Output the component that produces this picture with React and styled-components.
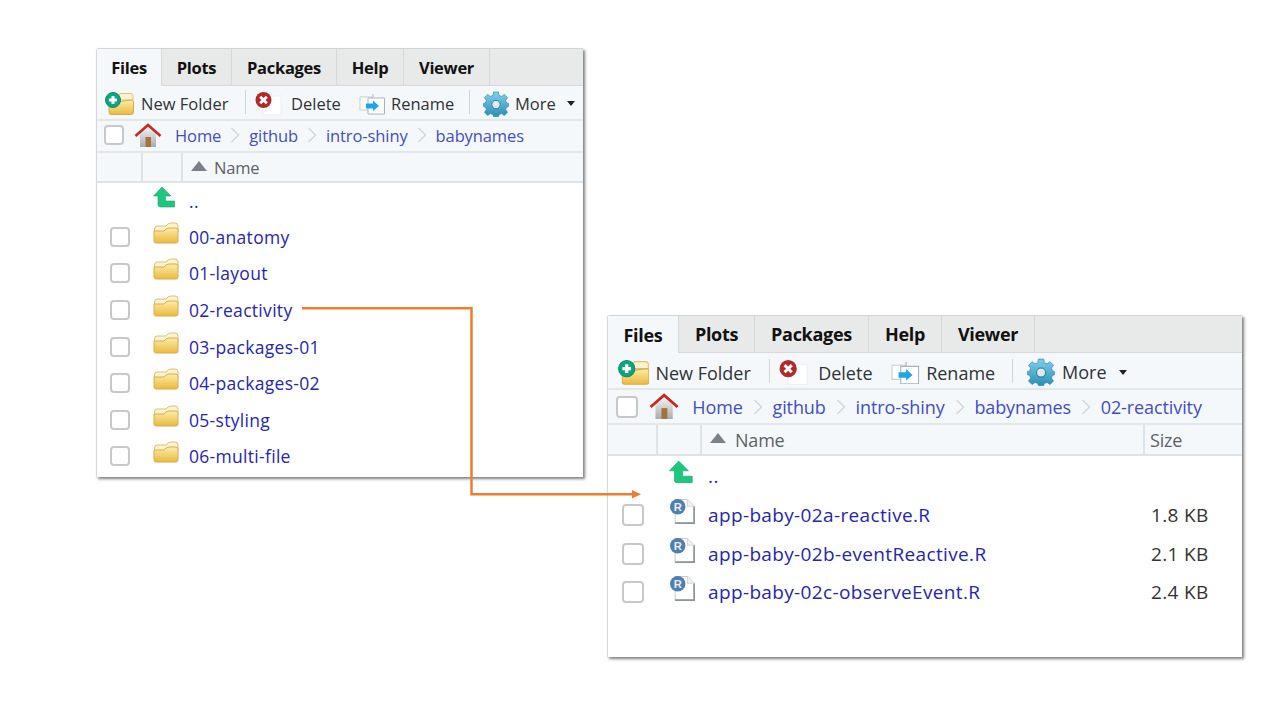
import React from 'react';
import styled, { ThemeProvider, createGlobalStyle } from 'styled-components';

const GlobalStyle = createGlobalStyle`
  html, body {
    margin: 0;
    padding: 0;
    background: #fff;
    font-family: 'Open Sans', 'Noto Sans', sans-serif;
  }
`;

const smallPane = {
  left: 96, top: 48, width: 487, height: 429,
  font: 16.5, tabFont: 16.5, rowFont: 17.5, rowSpacing: 0.3,
  tabH: 37, toolH: 35, crumbH: 32, headH: 30, rowH: 36.6, firstRow: 35.5,
  box: 20, toolPad: 7, toolLift: 2, crumbLift: 2, crumbPad: 7, homeLeft: 10, homeRight: 13, crumbGap: 9, iconScale: 1,
  colA: 46, colB: 40, rowPad: 13, rowIconGap: 23, rowTextGap: 10,
  sizeCol: 0, sizeHead: 0,
  folderGap: 7, deleteGap: 9, renameGap: 5, moreGap: 6, caretGap: 5, gearMargin: 13, nameGap: 7,
};

const bigPane = {
  left: 607, top: 315, width: 635, height: 342,
  font: 18, tabFont: 18, rowFont: 19, rowSpacing: 0.35,
  tabH: 37, toolH: 37, crumbH: 35, headH: 31, rowH: 38.6, firstRow: 40,
  box: 22, toolPad: 9, toolLift: 4, crumbLift: 0, crumbPad: 8, homeLeft: 11, homeRight: 13, crumbGap: 9.9, iconScale: 1.08,
  colA: 50, colB: 44, rowPad: 14, rowIconGap: 25, rowTextGap: 11,
  sizeCol: 91, sizeHead: 97,
  folderGap: 6, deleteGap: 10, renameGap: 6, moreGap: 7, caretGap: 5, gearMargin: 14, nameGap: 9,
};

const Stage = styled.div`
  position: relative;
  width: 1280px;
  height: 720px;
  overflow: hidden;
  background: #fff;
`;

const Pane = styled.section`
  position: absolute;
  left: ${p => p.theme.left}px;
  top: ${p => p.theme.top}px;
  width: ${p => p.theme.width}px;
  height: ${p => p.theme.height}px;
  box-sizing: border-box;
  display: flex;
  flex-direction: column;
  background: #fff;
  border-top: 1px solid #d4d4d4;
  border-left: 1px solid #d8d8d8;
  border-top-left-radius: 3px;
  box-shadow: 2px 2px 3px rgba(0, 0, 0, 0.5);
  font-size: ${p => p.theme.font}px;
  overflow: visible;
`;

const TabStrip = styled.div`
  display: flex;
  height: ${p => p.theme.tabH}px;
  flex: none;
  background: #e8e9e9;
  border-bottom: 1px solid #d6d8d9;
  box-sizing: border-box;
`;

const Tab = styled.div`
  width: ${p => p.$w}px;
  box-sizing: border-box;
  display: flex;
  align-items: center;
  justify-content: center;
  font-weight: 700;
  font-size: ${p => p.theme.tabFont}px;
  color: #111;
  letter-spacing: -0.3px;
  border-right: 1px solid #d6d8d9;
  ${p => p.$active && `
    background: #f5f8fa;
    height: calc(100% + 1px);
  `}
`;

const Toolbar = styled.div`
  display: flex;
  align-items: center;
  height: ${p => p.theme.toolH}px;
  flex: none;
  box-sizing: border-box;
  padding-left: ${p => p.theme.toolPad}px;
  padding-top: ${p => p.theme.toolLift}px;
  background: #f5f8fa;
  border-bottom: 2px solid #e4e7e9;
  color: #2f3338;
`;

const Tool = styled.div`
  width: ${p => p.$w}px;
  flex: none;
  display: flex;
  align-items: center;
  gap: ${p => p.$gap}px;
  white-space: nowrap;
  svg {
    flex: none;
  }
`;

const ToolSep = styled.div`
  width: 1px;
  height: 24px;
  flex: none;
  margin: -4px ${p => p.$right}px 0 ${p => p.$left}px;
  background: #d2d5d7;
`;

const Caret = styled.span`
  width: 0;
  height: 0;
  flex: none;
  margin-left: ${p => p.theme.caretGap}px;
  border-left: 4.5px solid transparent;
  border-right: 4.5px solid transparent;
  border-top: 5px solid #222;
`;

const CrumbBar = styled.div`
  display: flex;
  align-items: center;
  height: ${p => p.theme.crumbH}px;
  flex: none;
  box-sizing: border-box;
  padding-left: ${p => p.theme.crumbPad}px;
  padding-bottom: ${p => p.theme.crumbLift}px;
  background: #f5f8fa;
  border-bottom: 2px solid #e4e7e9;
  color: #3f4fc0;
`;

const CheckBox = styled.span`
  display: block;
  flex: none;
  width: ${p => p.theme.box}px;
  height: ${p => p.theme.box}px;
  box-sizing: border-box;
  background: #fff;
  border: 2px solid #c8c8c8;
  border-radius: 4px;
`;

const HomeSlot = styled.span`
  display: flex;
  flex: none;
  margin: 0 ${p => p.theme.homeRight}px 0 ${p => p.theme.homeLeft}px;
`;

const Crumb = styled.span`
  letter-spacing: -0.1px;
  white-space: nowrap;
`;

const CrumbSep = styled.svg`
  flex: none;
  width: 10px;
  height: 16px;
  margin: 0 ${p => p.theme.crumbGap}px;
`;

const HeadRow = styled.div`
  display: flex;
  align-items: stretch;
  height: ${p => p.theme.headH}px;
  flex: none;
  box-sizing: border-box;
  background: #f5f8fa;
  border-bottom: 2px solid #e0e3e5;
  color: #5b6167;
`;

const HeadCell = styled.div`
  flex: ${p => (p.$grow ? '1' : 'none')};
  width: ${p => (p.$w ? `${p.$w}px` : 'auto')};
  box-sizing: border-box;
  display: flex;
  align-items: center;
  gap: ${p => p.theme.nameGap}px;
  padding-left: ${p => p.$pad || 0}px;
  border-right: ${p => (p.$noline ? 'none' : '2px solid #e0e3e5')};
  letter-spacing: -0.2px;
`;

const SortUp = styled.span`
  width: 0;
  height: 0;
  flex: none;
  border-left: ${p => 8 * p.theme.iconScale}px solid transparent;
  border-right: ${p => 8 * p.theme.iconScale}px solid transparent;
  border-bottom: ${p => 10 * p.theme.iconScale}px solid #7b8189;
  margin-bottom: 3px;
`;

const Rows = styled.div`
  display: flex;
  flex-direction: column;
  flex: 1;
`;

const Row = styled.div`
  display: flex;
  align-items: center;
  height: ${p => (p.$first ? p.theme.firstRow : p.theme.rowH)}px;
  flex: none;
  padding-left: ${p => p.theme.rowPad}px;
  font-size: ${p => p.theme.rowFont}px;
`;

const IconSlot = styled.span`
  display: flex;
  flex: none;
  margin-top: -8px;
  width: ${p => 26 * p.theme.iconScale}px;
  margin-left: ${p => p.theme.rowIconGap}px;
  margin-right: ${p => p.theme.rowTextGap}px;
`;

const BoxGap = styled.span`
  flex: none;
  width: ${p => p.theme.box}px;
`;

const FileLink = styled.span`
  flex: 1;
  color: #2626ac;
  white-space: nowrap;
  letter-spacing: ${p => p.theme.rowSpacing}px;
`;

const SizeCell = styled.span`
  flex: none;
  width: ${p => p.theme.sizeCol}px;
  color: #333;
  letter-spacing: ${p => p.theme.rowSpacing}px;
`;

const Connector = styled.svg`
  position: absolute;
  left: 0;
  top: 0;
  width: 1280px;
  height: 720px;
  pointer-events: none;
`;

const Defs = () => (
  <svg width="0" height="0" style={{ position: 'absolute' }}>
    <defs>
      <linearGradient id="folderFill" x1="0" y1="0" x2="0" y2="1">
        <stop offset="0" stopColor="#fcecaa" />
        <stop offset="1" stopColor="#ebba3e" />
      </linearGradient>
      <linearGradient id="gearFill" x1="0" y1="0" x2="0" y2="1">
        <stop offset="0" stopColor="#7fd0ea" />
        <stop offset="1" stopColor="#2b8fb5" />
      </linearGradient>
      <linearGradient id="wallFill" x1="0" y1="0" x2="0" y2="1">
        <stop offset="0" stopColor="#f2f2f2" />
        <stop offset="1" stopColor="#a9adb0" />
      </linearGradient>
    </defs>
  </svg>
);

const Folder = ({ scale = 1 }) => (
  <svg width={26 * scale} height={22 * scale} viewBox="0 0 26 22">
    <path d="M1.5 7 Q1.5 4 4 4 L13 4 Q15 1 18 1 L22 1 Q25 1 25 4 L25 10 L1.5 10 Z" fill="#fbf3cf" stroke="#d9c27a" />
    <path d="M1 9 L11 9 Q13 6 16 6 L23 6 Q25 6 25 8 L25 19 Q25 21 23 21 L3 21 Q1 21 1 19 Z" fill="url(#folderFill)" stroke="#d6ad4c" />
  </svg>
);

const NewFolderIcon = ({ scale = 1 }) => (
  <svg width={30 * scale} height={24 * scale} viewBox="0 0 30 24">
    <path d="M8 6 Q8 3 11 3 L15 3 L16 1.5 L26 1.5 Q29 1.5 29 4 L29 8 L8 8 Z" fill="#fbf3cf" stroke="#d9c27a" />
    <path d="M5 11 L27 8 Q29.5 8 29.5 10 L29.5 20 Q29.5 22.5 27 22.5 L7 22.5 Q5 22.5 5 20 Z" fill="url(#folderFill)" stroke="#d6ad4c" />
    <circle cx="9" cy="8" r="7.5" fill="#0fa37f" stroke="#0c8a6c" />
    <path d="M5 8 H13 M9 4 V12" stroke="#fff" strokeWidth="3" />
  </svg>
);

const DeleteIcon = ({ scale = 1 }) => (
  <svg width={27 * scale} height={24 * scale} viewBox="0 0 27 24">
    <rect x="8" y="4" width="18" height="19" fill="#fff" stroke="#eceeef" />
    <circle cx="8.5" cy="8" r="8" fill="#b02a2a" />
    <path d="M5.2 4.7 L11.8 11.3 M11.8 4.7 L5.2 11.3" stroke="#fff" strokeWidth="2.8" />
  </svg>
);

const RenameIcon = ({ scale = 1 }) => (
  <svg width={27 * scale} height={22 * scale} viewBox="0 0 27 22">
    <path d="M1 4 H13 V17 H1 Z" fill="#fff" stroke="#c9ccce" />
    <path d="M9 5 H25.5 V21 H9 Z" fill="#fff" stroke="#aeb2b5" />
    <path d="M14 1 V5" stroke="#aeb2b5" />
    <path d="M7 10.5 H14 V7.5 L20 13 L14 18 V15.5 H7 Z" fill="#1ea7e8" />
  </svg>
);

const GearIcon = ({ scale = 1 }) => (
  <svg width={26 * scale} height={26 * scale} viewBox="0 0 26 26">
    <path
      d="M10.5 1 H15.5 L16 4.3 L18.6 5.4 L21.3 3.4 L24.6 6.7 L22.6 9.4 L23.7 12 L25.5 12.4 V15.6 L23.7 16 L22.6 18.6 L24.6 21.3 L21.3 24.6 L18.6 22.6 L16 23.7 L15.5 25.5 H10.5 L10 23.7 L7.4 22.6 L4.7 24.6 L1.4 21.3 L3.4 18.6 L2.3 16 L0.5 15.6 V12.4 L2.3 12 L3.4 9.4 L1.4 6.7 L4.7 3.4 L7.4 5.4 L10 4.3 Z"
      fill="url(#gearFill)"
      stroke="#2a84a8"
      strokeWidth="0.6"
    />
    <circle cx="13" cy="13.5" r="4.2" fill="#dfe9ec" stroke="#2a7f9f" />
  </svg>
);

const HomeIcon = ({ scale = 1 }) => (
  <svg width={28 * scale} height={25 * scale} viewBox="0 0 28 25">
    <path d="M6 11 L14 4 L22 11 V24 H6 Z" fill="url(#wallFill)" />
    <rect x="11.5" y="14" width="5.5" height="10" fill="#a9713a" />
    <path d="M1.5 13 L14 2 L26.5 13" fill="none" stroke="#c8281e" strokeWidth="2.6" />
  </svg>
);

const UpIcon = ({ scale = 1 }) => (
  <svg width={22 * scale} height={22 * scale} viewBox="0 0 22 22">
    <path d="M9 1 L18 10 H12.5 V15 H21.5 V21 H7.5 Q5 21 5 18.5 V10 H0.5 Z" fill="#1fc67d" stroke="#17a86a" strokeWidth="0.6" />
  </svg>
);

const RFileIcon = ({ scale = 1 }) => (
  <svg width={26 * scale} height={26 * scale} viewBox="0 0 26 26">
    <path d="M6 1.5 H18 L24.5 8 V24.5 H6 Z" fill="#fff" stroke="#c8cbce" />
    <path d="M6 24.5 H24.5 V8" fill="none" stroke="#8f9498" strokeWidth="1.6" />
    <path d="M18 1.5 V8 H24.5" fill="#f2f2f2" stroke="#d6d8da" />
    <circle cx="8.5" cy="8.5" r="7.5" fill="#4f7fb0" />
    <text x="8.5" y="12.5" textAnchor="middle" fontFamily="'Liberation Sans', sans-serif" fontWeight="700" fontSize="11" fill="#e8eef5">R</text>
  </svg>
);

const Chevron = () => (
  <CrumbSep viewBox="0 0 10 16">
    <path d="M1.5 1 L8.5 8 L1.5 15" fill="none" stroke="#d0d3d5" strokeWidth="1.2" />
  </CrumbSep>
);

const FilePane = ({ theme, tabs, tools, crumbs, rows, showSize }) => {
  const s = theme.iconScale;
  return (
    <ThemeProvider theme={theme}>
      <Pane>
        <TabStrip>
          {tabs.map((t, i) => (
            <Tab key={t.label} $w={t.w} $active={i === 0}>{t.label}</Tab>
          ))}
        </TabStrip>
        <Toolbar>
          <Tool $w={tools[0]} $gap={theme.folderGap}><NewFolderIcon scale={s} />New Folder</Tool>
          <ToolSep $left={10} $right={9} />
          <Tool $w={tools[1]} $gap={theme.deleteGap}><DeleteIcon scale={s} />Delete</Tool>
          <Tool $w={tools[2]} $gap={theme.renameGap}><RenameIcon scale={s} />Rename</Tool>
          <ToolSep $left={10} $right={theme.gearMargin} />
          <Tool $w={tools[3]} $gap={theme.moreGap}><GearIcon scale={s} />More<Caret /></Tool>
        </Toolbar>
        <CrumbBar>
          <CheckBox />
          <HomeSlot><HomeIcon scale={s} /></HomeSlot>
          {crumbs.map((c, i) => (
            <React.Fragment key={c}>
              {i > 0 && <Chevron />}
              <Crumb>{c}</Crumb>
            </React.Fragment>
          ))}
        </CrumbBar>
        <HeadRow>
          <HeadCell $w={theme.colA} />
          <HeadCell $w={theme.colB} />
          <HeadCell $grow $pad={8} $noline={!showSize}><SortUp />Name</HeadCell>
          {showSize && <HeadCell $w={theme.sizeHead} $pad={5} $noline>Size</HeadCell>}
        </HeadRow>
        <Rows>
          <Row $first>
            <BoxGap />
            <IconSlot><UpIcon scale={s} /></IconSlot>
            <FileLink>..</FileLink>
          </Row>
          {rows.map(r => (
            <Row key={r.name}>
              <CheckBox />
              <IconSlot>{showSize ? <RFileIcon scale={s * 0.95} /> : <Folder scale={s} />}</IconSlot>
              <FileLink>{r.name}</FileLink>
              {showSize && <SizeCell>{r.size}</SizeCell>}
            </Row>
          ))}
        </Rows>
      </Pane>
    </ThemeProvider>
  );
};

const folders = ['00-anatomy', '01-layout', '02-reactivity', '03-packages-01', '04-packages-02', '05-styling', '06-multi-file'];
const scripts = [
  { name: 'app-baby-02a-reactive.R', size: '1.8 KB' },
  { name: 'app-baby-02b-eventReactive.R', size: '2.1 KB' },
  { name: 'app-baby-02c-observeEvent.R', size: '2.4 KB' },
];

const App = () => (
  <Stage>
    <GlobalStyle />
    <Defs />
    <FilePane
      theme={smallPane}
      tabs={[
        { label: 'Files', w: 65 },
        { label: 'Plots', w: 70 },
        { label: 'Packages', w: 105 },
        { label: 'Help', w: 67 },
        { label: 'Viewer', w: 86 },
      ]}
      tools={[131, 104, 100, 100]}
      crumbs={['Home', 'github', 'intro-shiny', 'babynames']}
      rows={folders.map(name => ({ name }))}
    />
    <FilePane
      theme={bigPane}
      showSize
      tabs={[
        { label: 'Files', w: 71 },
        { label: 'Plots', w: 76 },
        { label: 'Packages', w: 114 },
        { label: 'Help', w: 73 },
        { label: 'Viewer', w: 93 },
      ]}
      tools={[142, 112, 111, 110]}
      crumbs={['Home', 'github', 'intro-shiny', 'babynames', '02-reactivity']}
      rows={scripts}
    />
    <Connector viewBox="0 0 1280 720">
      <path d="M302 308.3 H471.5 V494.3 H633" fill="none" stroke="#ed7d31" strokeWidth="2.5" />
      <path d="M632 490 L641 494.3 L632 498.6 Z" fill="#ed7d31" />
    </Connector>
  </Stage>
);

export default App;
